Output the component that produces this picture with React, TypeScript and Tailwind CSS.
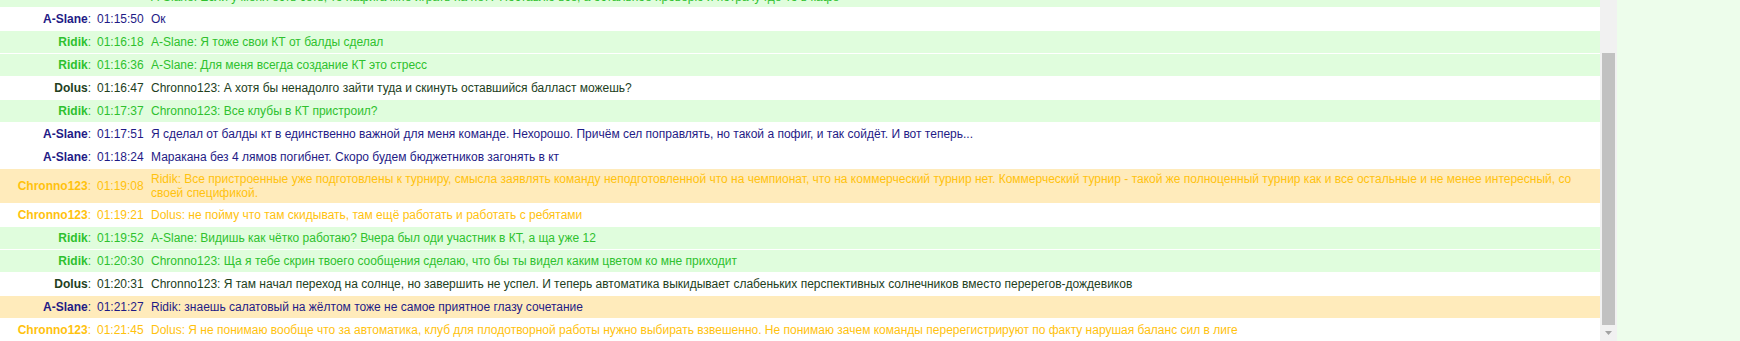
import React from "react";

type Author = "A-Slane" | "Ridik" | "Dolus" | "Chronno123";
type Tone = "white" | "green" | "orange";

interface Msg {
  author: Author;
  time: string;
  text: string;
  tone: Tone;
}

const authorColor: Record<Author, string> = {
  "A-Slane": "text-[#1f1b86]",
  Ridik: "text-[#2ec12e]",
  Dolus: "text-[#22401c]",
  Chronno123: "text-[#ffc20e]",
};

const toneBg: Record<Tone, string> = {
  white: "bg-white",
  green: "bg-[#e0fddd]",
  orange: "bg-[#ffebbb]",
};

const messages: Msg[] = [
  {
    author: "Ridik",
    time: "01:15:41",
    text: "Dolus: Ну вот и я о том же, сети надо ставить с умом\nA-Slane: Если у меня есть сеть, то нафига мне играть на нёт? Поставлю всё, а остальное проверю и потрачу где-то в кафе",
    tone: "green",
  },
  { author: "A-Slane", time: "01:15:50", text: "Ок", tone: "white" },
  { author: "Ridik", time: "01:16:18", text: "A-Slane: Я тоже свои КТ от балды сделал", tone: "green" },
  { author: "Ridik", time: "01:16:36", text: "A-Slane: Для меня всегда создание КТ это стресс", tone: "green" },
  {
    author: "Dolus",
    time: "01:16:47",
    text: "Chronno123: А хотя бы ненадолго зайти туда и скинуть оставшийся балласт можешь?",
    tone: "white",
  },
  { author: "Ridik", time: "01:17:37", text: "Chronno123: Все клубы в КТ пристроил?", tone: "green" },
  {
    author: "A-Slane",
    time: "01:17:51",
    text: "Я сделал от балды кт в единственно важной для меня команде. Нехорошо. Причём сел поправлять, но такой а пофиг, и так сойдёт. И вот теперь...",
    tone: "white",
  },
  {
    author: "A-Slane",
    time: "01:18:24",
    text: "Маракана без 4 лямов погибнет. Скоро будем бюджетников загонять в кт",
    tone: "white",
  },
  {
    author: "Chronno123",
    time: "01:19:08",
    text: "Ridik: Все пристроенные уже подготовлены к турниру, смысла заявлять команду неподготовленной что на чемпионат, что на коммерческий турнир нет. Коммерческий турнир - такой же полноценный турнир как и все остальные и не менее интересный, со своей спецификой.",
    tone: "orange",
  },
  {
    author: "Chronno123",
    time: "01:19:21",
    text: "Dolus: не пойму что там скидывать, там ещё работать и работать с ребятами",
    tone: "white",
  },
  {
    author: "Ridik",
    time: "01:19:52",
    text: "A-Slane: Видишь как чётко работаю? Вчера был оди участник в КТ, а ща уже 12",
    tone: "green",
  },
  {
    author: "Ridik",
    time: "01:20:30",
    text: "Chronno123: Ща я тебе скрин твоего сообщения сделаю, что бы ты видел каким цветом ко мне приходит",
    tone: "green",
  },
  {
    author: "Dolus",
    time: "01:20:31",
    text: "Chronno123: Я там начал переход на солнце, но завершить не успел. И теперь автоматика выкидывает слабеньких перспективных солнечников вместо перерегов-дождевиков",
    tone: "white",
  },
  {
    author: "A-Slane",
    time: "01:21:27",
    text: "Ridik: знаешь салатовый на жёлтом тоже не самое приятное глазу сочетание",
    tone: "orange",
  },
  {
    author: "Chronno123",
    time: "01:21:45",
    text: "Dolus: Я не понимаю вообще что за автоматика, клуб для плодотворной работы нужно выбирать взвешенно. Не понимаю зачем команды перерегистрируют по факту нарушая баланс сил в лиге",
    tone: "white",
  },
];

const Row = ({ m }: { m: Msg }) => (
  <div className={`flex min-h-[22px] items-center ${toneBg[m.tone]} ${authorColor[m.author]}`}>
    <div className="w-[91px] shrink-0 whitespace-nowrap text-right">
      <span className="font-bold">{m.author}</span>:
    </div>
    <div className="ml-[6px] w-[47px] shrink-0 whitespace-nowrap">{m.time}</div>
    <div className="ml-[7px] flex-1 whitespace-pre-line py-[3px] pr-[6px] leading-[14px]">{m.text}</div>
  </div>
);

export default function App() {
  return (
    <div
      className="flex h-[341px] w-[1740px] overflow-hidden bg-white text-[12px] leading-[14px]"
      style={{ fontFamily: '"Liberation Sans", Arial, sans-serif' }}
    >
      {/* chat log */}
      <div className="w-[1600px] shrink-0 overflow-hidden">
        <div className="-mt-[27px] flex flex-col gap-px bg-white">
          {messages.map((m, i) => (
            <Row key={i} m={m} />
          ))}
        </div>
      </div>

      {/* scrollbar */}
      <div className="flex w-[17px] shrink-0 flex-col bg-[#f1f1f1] pt-[53px]">
        <div className="mx-[2px] h-[272px] bg-[#c1c1c1]" />
        <div className="flex flex-1 items-center justify-center">
          <svg width="7" height="4" viewBox="0 0 7 4">
            <path d="M0 0h7L3.5 4z" fill="#a3a3a3" />
          </svg>
        </div>
      </div>

      {/* side panel */}
      <div className="flex-1 bg-[#edfdeb]" />
    </div>
  );
}
